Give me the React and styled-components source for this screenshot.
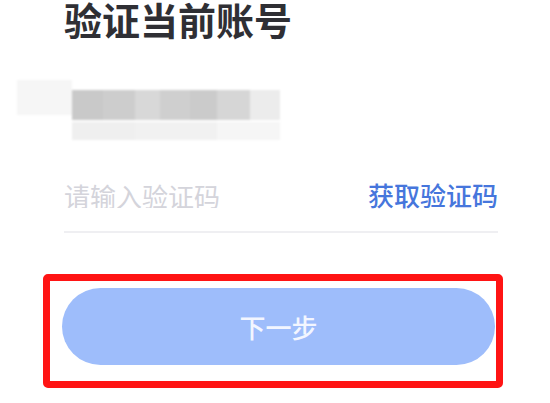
import React from "react";
import styled, { createGlobalStyle } from "styled-components";

const GlobalStyle = createGlobalStyle`
  html, body {
    margin: 0;
    padding: 0;
    background: #ffffff;
  }
  body {
    font-family: "Noto Sans CJK SC", "Noto Sans", sans-serif;
    -webkit-font-smoothing: antialiased;
  }
`;

const Page = styled.div`
  width: 550px;
  height: 403px;
  overflow: hidden;
  box-sizing: border-box;
  padding: 0 52px 0 64px;
  display: flex;
  flex-direction: column;
`;

const Title = styled.h1`
  margin: 0;
  font-size: 38px;
  line-height: 38px;
  font-weight: 700;
  color: #2f2f34;
  letter-spacing: 0;
`;

const Masked = styled.div`
  margin: 42px 0 0 -47px;
  height: 60px;
  display: flex;
  filter: blur(1px);
`;

const Patch = styled.div`
  width: 55px;
  height: 35px;
  background: #f6f6f6;
`;

const MaskColumn = styled.div`
  padding-top: 10px;
  display: flex;
  flex-direction: column;
  gap: 2px;
`;

const Strip = styled.div`
  display: flex;
  height: ${(p) => p.$h}px;
`;

const Segment = styled.div`
  width: ${(p) => p.$w}px;
  height: 100%;
  background: ${(p) => p.$c};
`;

const CodeRow = styled.div`
  margin-top: 42px;
  padding-bottom: 23px;
  display: flex;
  align-items: center;
  justify-content: space-between;
  border-bottom: 2px solid #efeff2;
`;

const CodeInput = styled.input`
  flex: 1;
  min-width: 0;
  border: none;
  outline: none;
  padding: 0;
  background: transparent;
  font-family: inherit;
  font-size: 26px;
  line-height: 26px;
  height: 26px;
  color: #333;

  &::placeholder {
    color: #d4d4db;
  }
`;

const SendLink = styled.span`
  font-size: 26px;
  line-height: 26px;
  font-weight: 500;
  color: #4676dc;
  cursor: pointer;
  white-space: nowrap;
`;

const Highlight = styled.div`
  margin: 41px 0 0 -21px;
  width: 460px;
  box-sizing: border-box;
  border: 7px solid #ff1414;
  border-radius: 5px;
  padding: 7px 1px 16px 12px;
`;

const NextButton = styled.button`
  display: flex;
  align-items: center;
  justify-content: center;
  width: 433px;
  height: 77px;
  border: none;
  border-radius: 39px;
  background: #9ebdfb;
  color: #f3f6ff;
  font-family: inherit;
  font-size: 26px;
  font-weight: 500;
  letter-spacing: 0;
  padding: 0;
  cursor: not-allowed;
`;

const topSegments = [
  [31, "#c9c9c9"],
  [32, "#cdcdcd"],
  [25, "#d8d8d8"],
  [30, "#cfcfcf"],
  [27, "#cbcbcb"],
  [33, "#d6d6d6"],
  [30, "#ececec"],
];

const bottomSegments = [
  [63, "#efefef"],
  [82, "#f1f1f1"],
  [63, "#f6f6f6"],
];

export default function App() {
  return (
    <>
      <GlobalStyle />
      <Page>
        <Title>验证当前账号</Title>
        <Masked>
          <Patch />
          <MaskColumn>
            <Strip $h={30}>
              {topSegments.map(([w, c], i) => (
                <Segment key={i} $w={w} $c={c} />
              ))}
            </Strip>
            <Strip $h={18}>
              {bottomSegments.map(([w, c], i) => (
                <Segment key={i} $w={w} $c={c} />
              ))}
            </Strip>
          </MaskColumn>
        </Masked>
        <CodeRow>
          <CodeInput placeholder="请输入验证码" />
          <SendLink>获取验证码</SendLink>
        </CodeRow>
        <Highlight>
          <NextButton disabled>下一步</NextButton>
        </Highlight>
      </Page>
    </>
  );
}
